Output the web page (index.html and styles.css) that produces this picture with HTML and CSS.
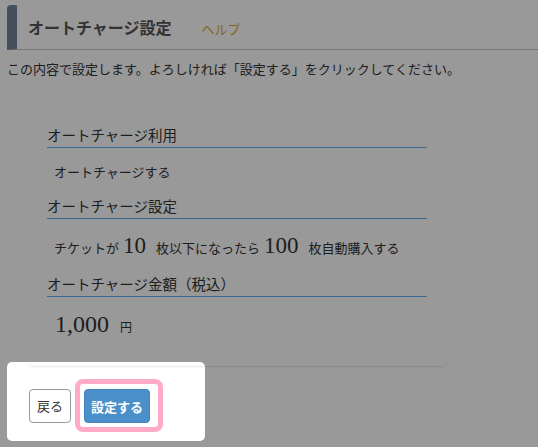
FILE: index.html
```html
<!DOCTYPE html>
<html lang="ja">
<head>
    <meta charset="UTF-8">
    <meta name="viewport" content="width=device-width, initial-scale=1.0">
    <title>オートチャージ設定</title>
    <link rel="stylesheet" href="styles.css">
</head>
<body>
    <div class="page">
        <div class="page-head">
            <h1 class="page-title">オートチャージ設定</h1>
            <a class="help" href="#">ヘルプ</a>
        </div>
        <p class="lead">この内容で設定します。よろしければ「設定する」をクリックしてください。</p>

        <div class="card">
            <section class="item">
                <h2 class="item-title">オートチャージ利用</h2>
                <div class="item-value">オートチャージする</div>
            </section>
            <section class="item">
                <h2 class="item-title">オートチャージ設定</h2>
                <div class="item-value num-row">チケットが<span class="num">10</span>枚以下になったら<span class="num">100</span>枚自動購入する</div>
            </section>
            <section class="item">
                <h2 class="item-title">オートチャージ金額（税込）</h2>
                <div class="item-value num-row"><span class="num big">1,000</span><span class="yen">円</span></div>
            </section>
        </div>

        <div class="actions">
            <button class="btn btn-back">戻る</button>
            <div class="focus-ring">
                <button class="btn btn-submit">設定する</button>
            </div>
        </div>
    </div>

    <!-- tutorial overlay: dims the page except the footer -->
    <div class="spotlight"></div>
</body>
</html>
```

FILE: styles.css
```css
body {
    margin: 0;
    background: #fff;
    font-family: "Noto Sans CJK JP", "Noto Sans", sans-serif;
    color: #333;
}
.page {
    padding: 5px 0 0 7px;
}
.page-head {
    display: flex;
    align-items: center;
    height: 44px;
    border-left: 10px solid #74859a;
    border-bottom: 1px solid #c6c6c6;
    border-radius: 4px 0 0 0;
}
.page-title {
    margin: 0 0 0 11px;
    font-size: 16px;
    font-weight: bold;
    color: #555;
}
.help {
    margin-left: 30px;
    margin-top: 3px;
    font-size: 13px;
    color: #e0a82a;
    text-decoration: none;
}
.lead {
    margin: 9px 0 0;
    font-size: 13px;
    line-height: 19px;
    color: #333;
}
.card {
    margin: 20px 0 0 20px;
    width: 380px;
    padding: 27px 20px 24px;
    border-radius: 6px;
    box-shadow: 0 2px 2px -1px rgba(0, 0, 0, 0.1);
}
.item-title {
    margin: 0;
    padding-bottom: 2px;
    font-size: 14.5px;
    font-weight: normal;
    line-height: 20px;
    color: #333;
    border-bottom: 1px solid #62aef0;
}
.item-value {
    margin: 14px 0 15px;
    padding-left: 7px;
    font-size: 13px;
    line-height: 19px;
}
.num-row {
    margin: 12px 0 11px;
    line-height: 30px;
}
.item:last-child .item-value {
    margin-bottom: 0;
}
.num {
    margin: 0 10px 0 4px;
    font-family: "Liberation Serif", serif;
    font-size: 23px;
}
.num.big {
    margin: 0 11px 0 1px;
    font-size: 24px;
}
.yen {
    font-size: 12px;
}
.actions {
    display: flex;
    align-items: center;
    gap: 4px;
    margin: 13px 0 0 22px;
}
.btn {
    height: 34px;
    border-radius: 4px;
    font-family: "Noto Sans CJK JP", sans-serif;
    font-size: 13px;
    cursor: pointer;
}
.btn-back {
    width: 42px;
    padding: 0;
    background: #fff;
    border: 1px solid #999;
    color: #333;
}
.focus-ring {
    display: flex;
    padding: 5px 8px 4px 4px;
    border: 5px solid #ffaac9;
    border-radius: 8px;
}
.btn-submit {
    width: 66px;
    padding: 0;
    background: #4a8fca;
    border: 1px solid #4283bb;
    color: #fff;
    font-weight: bold;
}
.spotlight {
    position: absolute;
    left: 7px;
    top: 362px;
    width: 198px;
    height: 79px;
    border-radius: 5px;
    box-shadow: 0 0 0 1200px rgba(0, 0, 0, 0.4);
    z-index: 10;
}
```
